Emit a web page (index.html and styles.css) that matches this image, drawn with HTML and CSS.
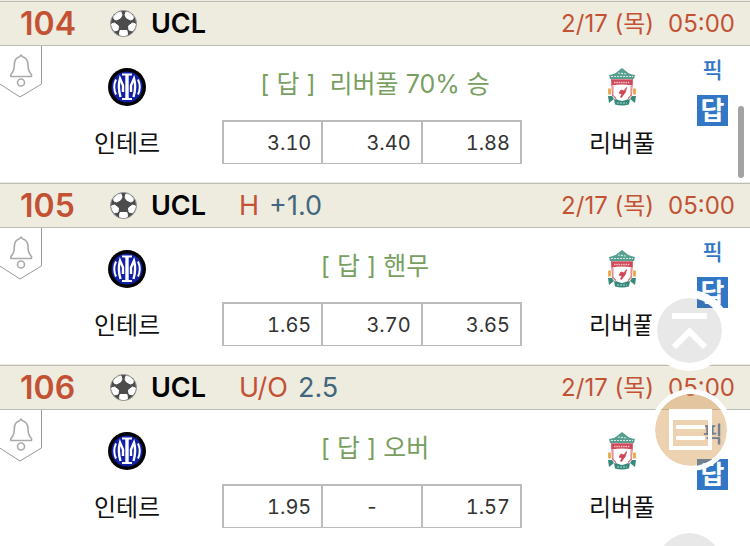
FILE: index.html
```html
<!DOCTYPE html>
<html lang="ko">
<head>
    <meta charset="UTF-8">
    <meta name="viewport" content="width=device-width, initial-scale=1.0">
    <title>UCL</title>
    <link rel="stylesheet" href="styles.css">
</head>
<body>
    <svg class="sprite" aria-hidden="true">
        <symbol id="ball" viewBox="0 0 27 27">
            <circle cx="13.5" cy="13.5" r="13" fill="#4c4c4c" stroke="#999" stroke-width="1"/>
            <g fill="#fff" stroke="#fff" stroke-width="1" stroke-linejoin="round">
                <path d="M3.800 6.500 7 3.200l4-1.200L12 5 10.500 8 6.500 10 4 9z"/>
                <path d="M23.200 6.500 20 3.200l-4-1.200L15 5l1.500 3 4 2L23 9z"/>
                <path d="M1.500 14 4.500 13l4 3-.5 4-3.500 1L2.500 18z"/>
                <path d="M25.500 14 22.500 13l-4 3 .5 4 3.500 1L24.500 18z"/>
                <path d="M10 20.500h7l.5 4-2 1h-4l-2-1z"/>
            </g>
        </symbol>
        <symbol id="bell" viewBox="0 0 43 52">
            <path d="M-1 37.500 20 51 41.500 38V-1" fill="none" stroke="#999" stroke-width="1"/>
            <g fill="none" stroke="#aaa" stroke-width="1.600" stroke-linejoin="round">
                <path d="M21 9 19.500 10.800C15.500 12 14.300 15 14.300 19c0 5-.8 7-3.500 9.500V30.500H31.500V28.500C29 26 28 24 28 19c0-4-1.500-7-5.500-8.200z"/>
                <circle cx="21" cy="36.500" r="3.500"/>
            </g>
        </symbol>
        <symbol id="inter" viewBox="0 0 38 38">
            <circle cx="19" cy="19" r="19" fill="#000"/>
            <circle cx="19" cy="19" r="15.500" fill="#1220a5"/>
            <g fill="none" stroke="#fff">
                <path d="M19 6.500V31" stroke-width="3.400"/>
                <path d="M14 6.500H24M14 31H24" stroke-width="2"/>
                <path d="M8 11.500Q4.500 19 8 26.500M30 11.500Q33.500 19 30 26.500" stroke-width="2"/>
                <path d="M12.500 29Q9.500 19 12 10.500L15 17.500V24M25.500 29Q28.500 19 26 10.500L23 17.500V24" stroke-width="2.400"/>
            </g>
        </symbol>
        <symbol id="liverpool" viewBox="0 0 28 38">
            <path d="M3.500 11h21l-1 17-9.500 8-9.500-8z" fill="#fff" stroke="#d67b86" stroke-width="1"/>
            <path d="M1 7Q7 6 9.500 3.500L14 0l4.500 3.500Q21 6 27 7l-1 4H2z" fill="#579f91"/>
            <path d="M3 8.500H25M10 5l8 1" stroke="#d5e8e2" stroke-width="1.200" stroke-dasharray="2 1"/>
            <path d="M3.500 11.500h21v6Q14 15.500 3.500 17.500z" fill="#cf4658"/>
            <path d="M6 14.500H22" stroke="#f2c5ca" stroke-width="1.500" stroke-dasharray="1.500 .8"/>
            <path d="M5 18v9l3 3M23 18v9l-3 3" fill="none" stroke="#d9808c" stroke-width="1"/>
            <path d="M18.500 19.500 16 23l-3-1-2 3 3 1-1.500 3 1 .5L16 26l1.500-2z" fill="#cf4658" stroke="#cf4658" stroke-width=".8"/>
            <path d="M1.500 20.500v6M26.500 20.500v6" stroke="#e9a33d" stroke-width="2.600"/>
            <path d="M0 28h4l2 3-5 4zM28 28h-4l-2 3 5 4zM6 31l8 2 8-2-1 5.500q-7 2-14 0z" fill="#34897a"/>
            <path d="M9 35h10" stroke="#b5d9cf" stroke-width="1" stroke-dasharray="2 1"/>
        </symbol>
        <symbol id="top" viewBox="0 0 65 65">
            <path d="M15 18H50M17 49 32.500 33.500 48 49" fill="none" stroke="#fff" stroke-width="6"/>
        </symbol>
        <symbol id="list" viewBox="0 0 72 72">
            <path d="M14 15H57V56H14zM18 26V52H53V26z" fill="#fff" fill-rule="evenodd"/>
            <path d="M21 33H50M21 44H50" stroke="#fff" stroke-width="4"/>
        </symbol>
    </svg>

    <main>
        <article class="match">
            <header class="match-header">
                <span class="number">104</span>
                <svg class="ball"><use href="#ball"/></svg>
                <span class="league">UCL</span>
                <time class="date"><span>2/17 (목)</span><span>05:00</span></time>
            </header>
            <div class="match-body">
                <button class="alarm" aria-label="알림"><svg><use href="#bell"/></svg></button>
                <div class="team">
                    <svg class="logo"><use href="#inter"/></svg>
                    <span>인테르</span>
                </div>
                <div class="center">
                    <p class="answer">[ 답 ]&nbsp; 리버풀 70% 승</p>
                    <table class="odds">
                        <tr><td>3.10</td><td>3.40</td><td>1.88</td></tr>
                    </table>
                </div>
                <div class="team">
                    <svg class="logo"><use href="#liverpool"/></svg>
                    <span>리버풀</span>
                </div>
                <div class="picks">
                    <button class="pick">픽</button>
                    <button class="pick active">답</button>
                </div>
            </div>
        </article>

        <article class="match">
            <header class="match-header">
                <span class="number">105</span>
                <svg class="ball"><use href="#ball"/></svg>
                <span class="league">UCL</span>
                <span class="type">H</span>
                <span class="line">+1.0</span>
                <time class="date"><span>2/17 (목)</span><span>05:00</span></time>
            </header>
            <div class="match-body">
                <button class="alarm" aria-label="알림"><svg><use href="#bell"/></svg></button>
                <div class="team">
                    <svg class="logo"><use href="#inter"/></svg>
                    <span>인테르</span>
                </div>
                <div class="center">
                    <p class="answer">[ 답 ] 핸무</p>
                    <table class="odds">
                        <tr><td>1.65</td><td>3.70</td><td>3.65</td></tr>
                    </table>
                </div>
                <div class="team">
                    <svg class="logo"><use href="#liverpool"/></svg>
                    <span>리버풀</span>
                </div>
                <div class="picks">
                    <button class="pick">픽</button>
                    <button class="pick active">답</button>
                </div>
            </div>
        </article>

        <article class="match">
            <header class="match-header">
                <span class="number">106</span>
                <svg class="ball"><use href="#ball"/></svg>
                <span class="league">UCL</span>
                <span class="type">U/O</span>
                <span class="line">2.5</span>
                <time class="date"><span>2/17 (목)</span><span>05:00</span></time>
            </header>
            <div class="match-body">
                <button class="alarm" aria-label="알림"><svg><use href="#bell"/></svg></button>
                <div class="team">
                    <svg class="logo"><use href="#inter"/></svg>
                    <span>인테르</span>
                </div>
                <div class="center">
                    <p class="answer">[ 답 ] 오버</p>
                    <table class="odds">
                        <tr><td>1.95</td><td class="none">-</td><td>1.57</td></tr>
                    </table>
                </div>
                <div class="team">
                    <svg class="logo"><use href="#liverpool"/></svg>
                    <span>리버풀</span>
                </div>
                <div class="picks">
                    <button class="pick">픽</button>
                    <button class="pick active">답</button>
                </div>
            </div>
        </article>
    </main>

    <button class="float go-top" aria-label="맨 위로"><svg><use href="#top"/></svg></button>
    <button class="float menu" aria-label="목록"><svg><use href="#list"/></svg></button>
    <button class="float go-bottom" aria-label="맨 아래로"></button>
    <div class="scroll-thumb"></div>
</body>
</html>
```
FILE: styles.css
```css
* {
    box-sizing: border-box;
}

body {
    margin: 0;
    background-color: #fff;
    color: #111;
    font-family: Inter, "Noto Sans CJK KR", sans-serif;
    font-size: 24px;
}

button {
    padding: 0;
    border: none;
    background: none;
    font-family: inherit;
    cursor: pointer;
}

svg {
    display: block;
}

.sprite {
    position: absolute;
    width: 0;
    height: 0;
}

.match {
    padding-top: 1px;
    background-color: #eeecdf;
}

.match-header {
    display: flex;
    align-items: center;
    height: 45px;
    padding: 0 15px 0 20px;
    border-top: 1px solid #bcbcb6;
    border-bottom: 1px solid #bcbcb6;
    line-height: 43px;
}

.number {
    width: 90px;
    color: #c35235;
    font-size: 32px;
    font-weight: 600;
}

.ball {
    width: 27px;
    height: 27px;
    margin-right: 14px;
}

.league {
    width: 88px;
    color: #000;
    font-size: 27px;
    font-weight: 600;
}

.type {
    margin-right: 10px;
    color: #c35235;
    font-size: 27px;
}

.line {
    color: #42677c;
    font-size: 27px;
}

.date {
    display: flex;
    gap: 14px;
    margin-left: auto;
    color: #c35235;
}

.match-body {
    position: relative;
    display: grid;
    grid-template-columns: 1fr 345px 1fr auto;
    height: 136px;
    padding: 0 22px 0 52px;
    background-color: #fff;
}

/* ribbon hanging from the header */
.alarm {
    position: absolute;
    top: 0;
    left: 0;
}

.alarm svg {
    width: 43px;
    height: 52px;
}

.team {
    display: flex;
    flex-direction: column;
    align-items: center;
    gap: 21px;
    padding-top: 22px;
    line-height: 34px;
}

.logo {
    width: 38px;
    height: 38px;
}

.center {
    padding: 20px 25px 0 20px;
}

.answer {
    margin: 0 0 18px;
    padding-left: 6px;
    color: #789f61;
    font-size: 25px;
    line-height: 36px;
    text-align: center;
}

.odds {
    width: 100%;
    height: 44px;
    border-collapse: collapse;
    table-layout: fixed;
}

.odds td {
    padding: 0 10px;
    border: 2px solid #bbb;
    border-bottom-width: 1px;
    color: #333;
    font-size: 20px;
    font-variant-numeric: tabular-nums;
    text-align: right;
}

.odds .none {
    text-align: center;
}

.picks {
    display: flex;
    flex-direction: column;
    align-items: center;
    gap: 9px;
    padding-top: 9px;
}

.pick {
    width: 31px;
    height: 31px;
    color: #3277c6;
    font-size: 22px;
    font-weight: 500;
    line-height: 31px;
}

.pick.active {
    background-color: #3277c6;
    color: #fff;
    font-size: 26px;
    font-weight: 700;
}

/* floating buttons */
.float {
    position: fixed;
    right: 20px;
    border: 8px solid #fff;
    border-radius: 50%;
    background-clip: padding-box;
}

.go-top,
.go-bottom {
    width: 81px;
    height: 81px;
    background-color: rgba(102, 102, 102, 0.15);
}

.go-top {
    top: 290px;
}

.go-bottom {
    top: 525px;
}

.menu {
    top: 389px;
    right: 18px;
    width: 82px;
    height: 82px;
    border-width: 5px;
    background-color: rgba(210, 142, 62, 0.4);
}

.float svg {
    width: 100%;
    height: 100%;
}

.scroll-thumb {
    position: fixed;
    top: 106px;
    right: 6px;
    width: 6px;
    height: 72px;
    border-radius: 3px;
    background-color: #a3a3a3;
}
```
